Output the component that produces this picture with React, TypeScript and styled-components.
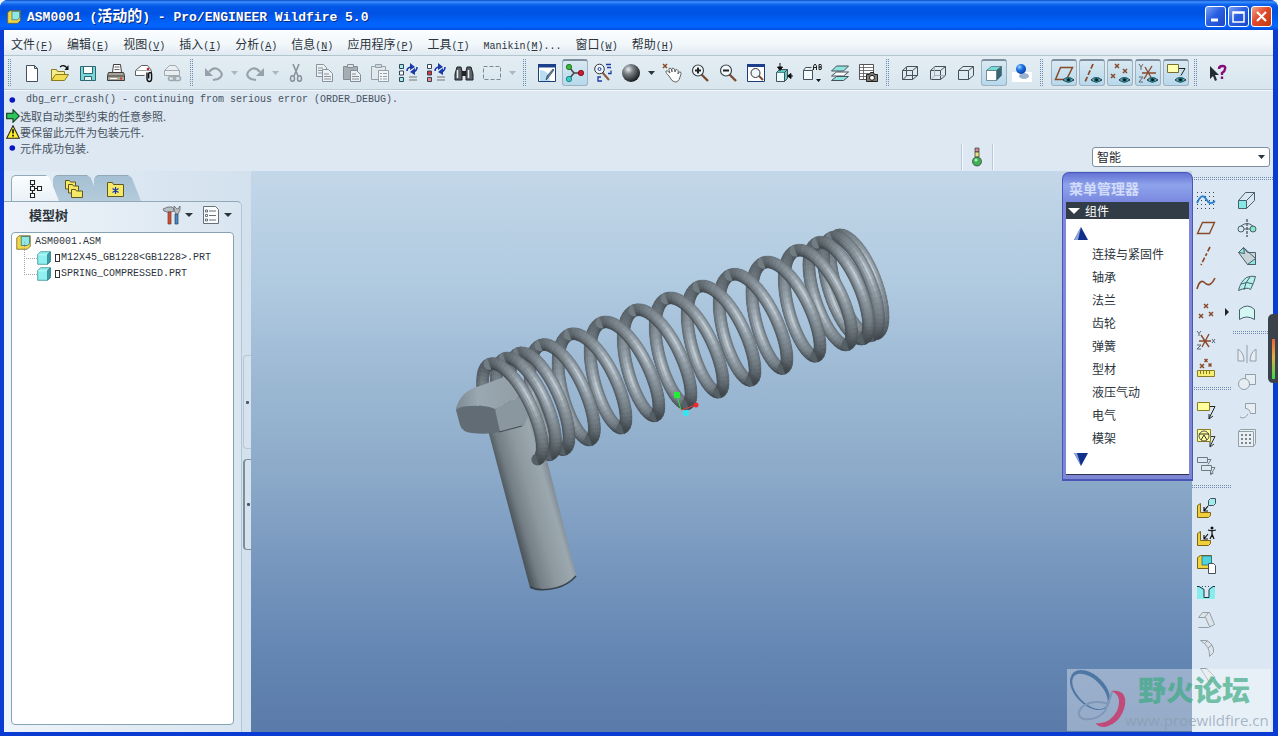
import React from "react";
import styled, { createGlobalStyle, css } from "styled-components";

const GlobalStyle = createGlobalStyle`
  * { box-sizing: border-box; }
  body { margin: 0; background: #eef3f8; color: #2c343c; font: 12px/16px "Noto Sans CJK SC", sans-serif; }
  button { font: inherit; color: inherit; border: 0; padding: 0; background: none; }
  ul { list-style: none; margin: 0; padding: 0; }
`;

/* ---------- window frame ---------- */

const Frame = styled.div`
  min-height: 100vh;
  display: flex;
  flex-direction: column;
  position: relative;
  overflow: hidden;
  border-radius: 8px 8px 0 0;
  background: #0a3cd4;
`;

const TitleBar = styled.header`
  height: 30px;
  flex: none;
  display: flex;
  align-items: center;
  gap: 6px;
  padding: 3px 6px 0 7px;
  background: linear-gradient(#0848c8 0, #3d95ff 2px, #1468f0 4px, #0055e6 7px, #0053e2 14px, #0062fb 22px, #0566ff 26px, #004fe0 30px);
`;

const Title = styled.h1`
  flex: 1;
  margin: 0;
  color: #fff;
  font: bold 13px/20px "Liberation Mono", monospace;
  text-shadow: 1px 1px #0a2a80;
  white-space: pre;
`;

const TitleCjk = styled.span`
  font: bold 15px/20px "Noto Sans CJK SC", sans-serif;
`;

const WindowButtons = styled.div`
  display: flex;
  gap: 2px;
`;

const WindowButton = styled.button<{ $close?: boolean }>`
  width: 21px;
  height: 21px;
  border: 1px solid #fff;
  border-radius: 3px;
  background: ${(p) =>
    p.$close
      ? "linear-gradient(135deg, #f0a58c, #e0492a 45%, #c23a14)"
      : "linear-gradient(135deg, #7ba2f4, #2a60e2 45%, #1b46c8)"};
  svg { display: block; margin: auto; }
`;

const Client = styled.div`
  flex: 1;
  display: flex;
  flex-direction: column;
  margin: 0 5px 4px 4px;
  background: #dde8f3;
`;

const Latin = styled.span`
  font-family: "Liberation Mono", monospace;
  font-size: 10px;
  white-space: pre;
`;

const MenuBar = styled.nav`
  height: 26px;
  display: flex;
  align-items: center;
  gap: 14px;
  padding: 5px 7px 0;
  background: linear-gradient(#fcfeff, #f0f6fa 60%, #e0eaf1);
  border-bottom: 1px solid #b4c6d0;
`;

const MenuButton = styled.button`
  white-space: nowrap;
  line-height: 18px;
`;

/* ---------- tool bars ---------- */

const ToolBar = styled.div`
  height: 34px;
  display: flex;
  align-items: center;
  background: linear-gradient(#e3edf3, #d9e6ee);
  border-bottom: 1px solid #b9cad6;
  box-shadow: 0 1px #f4f8fb;
`;

const stripes = css<{ $flat?: boolean }>`
  background:
    linear-gradient(${(p) => (p.$flat ? "180deg" : "90deg")}, transparent 1px, #dde8f1 1px 2px, transparent 2px),
    repeating-linear-gradient(${(p) => (p.$flat ? "90deg" : "180deg")}, #6f8bb2 0 1px, transparent 1px 2px);
`;

const Grip = styled.div`
  width: 3px;
  height: 28px;
  flex: none;
  margin: 0 7px 0 4px;
  ${stripes}
`;

const ToolButton = styled.button<{ $active?: boolean; $dim?: boolean }>`
  width: 28px;
  height: 28px;
  flex: none;
  display: flex;
  align-items: center;
  justify-content: center;
  svg { flex: none; opacity: ${(p) => (p.$dim ? 0.9 : 1)}; }
  ${(p) =>
    p.$active &&
    css`
      width: 26px;
      height: 27px;
      margin: 0 1px;
      border: 1px solid #9db1c1;
      border-top: 2px solid #7d8e9c;
      border-radius: 3px;
      background: linear-gradient(#d8e8f2, #b7d9ec);
    `}
`;

const DropButton = styled.button<{ $dim?: boolean }>`
  width: 13px;
  height: 28px;
  flex: none;
  display: flex;
  align-items: center;
  justify-content: center;
  color: ${(p) => (p.$dim ? "#a9b7c2" : "#2b333b")};
`;

/* ---------- message area ---------- */

const MessageArea = styled.section`
  height: 81px;
  display: flex;
  justify-content: space-between;
  padding: 2px 3px 0 2px;
`;

const Messages = styled.ul`
  color: #48525e;
  font-size: 11px;
`;

const Message = styled.li`
  height: 16px;
  display: flex;
  align-items: center;
  svg { flex: none; }
`;

const StatusRow = styled.div`
  align-self: flex-end;
  display: flex;
  align-items: center;
  padding-bottom: 1px;
`;

const StatusLight = styled.div`
  width: 32px;
  height: 26px;
  display: flex;
  align-items: center;
  justify-content: center;
  margin-right: 99px;
  border: solid #b9c8d8;
  border-width: 0 1px;
  box-shadow: inset 1px 0 #f6fafd, 1px 0 #f6fafd;
`;

const FilterBox = styled.div`
  position: relative;
  display: flex;
  svg { position: absolute; right: 5px; top: 8px; pointer-events: none; }
`;

const FilterSelect = styled.select`
  appearance: none;
  width: 178px;
  height: 20px;
  padding: 0 4px;
  border: 1px solid #7d8fa1;
  border-radius: 3px;
  background: #fff;
  color: #22282e;
  font: 12px/18px "Noto Sans CJK SC", sans-serif;
`;

/* ---------- navigator ---------- */

const Workspace = styled.main`
  flex: 1;
  display: flex;
  position: relative;
`;

const Navigator = styled.aside`
  width: 247px;
  flex: none;
  display: flex;
  background: linear-gradient(90deg, #e3edf5, #d3e1ee);
`;

const NavMain = styled.div`
  flex: 1;
  display: flex;
  flex-direction: column;
  padding-top: 4px;
`;

const TabStrip = styled.div`
  display: flex;
  height: 26px;
  padding-left: 7px;
`;

const Tab = styled.button<{ $active?: boolean }>`
  position: relative;
  z-index: ${(p) => (p.$active ? 2 : 1)};
  width: ${(p) => (p.$active ? 48 : 47)}px;
  margin-right: -6px;
  padding-right: 6px;
  display: flex;
  align-items: center;
  justify-content: center;
  border-top: 1px solid #93a9b8;
  border-left: 1px solid ${(p) => (p.$active ? "#93a9b8" : "transparent")};
  border-radius: 5px 0 0 0;
  clip-path: polygon(0 0, 72% 0, 80% 10%, 100% 100%, 0 100%);
  background: ${(p) => (p.$active ? "linear-gradient(#fbfdfe, #e9f1f7)" : "linear-gradient(#a5c0d3, #b4cbdb)")};
`;

const NavPanel = styled.div`
  flex: 1;
  display: flex;
  flex-direction: column;
  padding: 0 7px 7px;
  border-top: 1px solid #93a9b8;
  border-right: 1px solid #b4c5d3;
  border-radius: 0 5px 0 0;
  background: linear-gradient(90deg, #eef4f9, #d9e5f0);
`;

const NavHeader = styled.div`
  height: 30px;
  display: flex;
  align-items: center;
  padding: 0 2px 4px 18px;
`;

const NavTitle = styled.h2`
  flex: 1;
  margin: 0;
  font-size: 13px;
  line-height: 18px;
`;

const NavTool = styled.button`
  display: flex;
  align-items: center;
  gap: 3px;
  margin-left: 8px;
`;

const TreeBox = styled.div`
  flex: 1;
  padding: 1px 4px;
  border: 1px solid #86a3b4;
  border-radius: 4px;
  background: #fff;
`;

const TreeRow = styled.li<{ $level?: number }>`
  position: relative;
  height: 16px;
  display: flex;
  align-items: center;
  gap: 4px;
  padding-left: ${(p) => (p.$level ? 21 : 0)}px;
  svg { flex: none; }
  ${(p) =>
    p.$level &&
    css`
      &::before {
        content: "";
        position: absolute;
        left: 8px;
        bottom: 7px;
        width: 12px;
        height: 16px;
        border: dotted #9aa4ac;
        border-width: 0 0 1px 1px;
      }
    `}
`;

const Missing = styled.span`
  width: 5px;
  height: 8px;
  margin-right: -3px;
  border: 1px solid #333;
`;

const Sash = styled.div`
  width: 9px;
  display: flex;
  flex-direction: column;
  gap: 10px;
  padding: 184px 0 0 1px;
`;

const SashButton = styled.button<{ $raised?: boolean }>`
  height: ${(p) => (p.$raised ? 91 : 94)}px;
  display: flex;
  align-items: center;
  justify-content: center;
  border: 1px solid ${(p) => (p.$raised ? "#7f8e9b" : "#b7c6d4")};
  border-right: 0;
  border-left-width: ${(p) => (p.$raised ? 2 : 1)}px;
  border-radius: 4px 0 0 4px;
  background: #d5e3ef;
  &::before {
    content: "";
    width: 3px;
    height: 3px;
    border-radius: 1px;
    background: #4a5865;
  }
`;

/* ---------- graphics area ---------- */

const Viewport = styled.section`
  flex: 1;
  position: relative;
  background: linear-gradient(#c3d7e8 0%, #b0cae0 20%, #9db9d4 36%, #8eacca 52%, #7797be 70%, #6486b3 86%, #5a7ba9 100%);
`;

const Scene = styled.svg`
  position: absolute;
  inset: 0;
  width: 100%;
  height: 100%;
`;

const MenuManager = styled.div`
  position: absolute;
  z-index: 3;
  top: 1px;
  right: -1px;
  width: 131px;
  padding: 0 3px 4px;
  border: 1px solid #4a55b8;
  border-width: 1px 1px 2px;
  border-radius: 7px 7px 0 0;
  background: linear-gradient(#6473d4, #8ea3ec 12px, #7b8ae0 28px, #8087dc 60px, #7c86d2);
`;

const ManagerTitle = styled.h2`
  margin: 0;
  padding: 5px 3px 4px;
  color: #d3dcfa;
  font-size: 14px;
  line-height: 20px;
`;

const ManagerGroup = styled.button`
  width: 100%;
  height: 17px;
  display: flex;
  align-items: center;
  gap: 5px;
  padding: 0 2px;
  background: #323c46;
  color: #fff;
  svg { height: 6px; }
`;

const ManagerBody = styled.div`
  padding: 5px 8px 7px;
  background: #fff;
  border-bottom: 1px solid #2a3350;
`;

const ManagerScroll = styled.button`
  display: block;
  height: 18px;
  svg { display: block; }
`;

const ManagerItem = styled.button`
  display: block;
  height: 23px;
  padding-left: 18px;
  white-space: nowrap;
`;

/* ---------- feature rail ---------- */

const Rail = styled.aside`
  width: 81px;
  flex: none;
  padding-top: 6px;
  background: #dbe8f3;
`;

const DotLine = styled.div<{ $flat?: boolean }>`
  height: 3px;
  ${stripes}
`;

const RailColumns = styled.div`
  display: grid;
  grid-template-columns: 40px 39px;
  gap: 1px;
  padding-top: 6px;
`;

const RailColumn = styled.div`
  display: flex;
  flex-direction: column;
`;

const RailBreak = styled.div`
  padding: 5px 0 6px;
`;

const RailButton = styled.button<{ $dim?: boolean }>`
  position: relative;
  height: 28px;
  padding-left: 4px;
  text-align: left;
  opacity: ${(p) => (p.$dim ? 0.55 : 1)};
  svg { display: block; }
`;

const Flyout = styled.span`
  position: absolute;
  right: 3px;
  top: 10px;
  border: 4px solid transparent;
  border-left-color: #222;
  border-right: 0;
`;

/* ---------- overlays ---------- */

const Watermark = styled.div`
  position: absolute;
  z-index: 4;
  right: 2px;
  bottom: 1px;
  display: flex;
  align-items: center;
  width: 204px;
  height: 62px;
  background: rgba(255, 255, 255, 0.36);
  pointer-events: none;
`;

const WatermarkText = styled.div`
  width: 146px;
  margin-left: -2px;
  white-space: nowrap;
`;

const WatermarkName = styled.div`
  padding-left: 13px;
  color: rgba(60, 170, 130, 0.7);
  font: 900 28px/41px "Noto Sans CJK SC", sans-serif;
`;

const WatermarkUrl = styled.div`
  color: rgba(135, 155, 175, 0.7);
  font: 15px/21px "Open Sans", sans-serif;
`;

const EdgeWidget = styled.div`
  position: absolute;
  z-index: 5;
  right: 0;
  top: 314px;
  width: 10px;
  height: 69px;
  padding: 25px 2px 4px 4px;
  border-radius: 5px 0 0 5px;
  background: #3b4148;
  &::before {
    content: "";
    display: block;
    width: 3px;
    height: 40px;
    background: linear-gradient(#e8643c, #e0b040 45%, #38d850);
  }
`;

/* ---------- icons ---------- */

const S = "#46505a";
const BR = "#8a4a2a";
const CY = "#9fecec";
const Cross = ({ x, y, c = BR, r = 2 }: { x: number; y: number; c?: string; r?: number }) => (
  <path d={`M${x - r} ${y - r}l${2 * r} ${2 * r}M${x + r} ${y - r}l${-2 * r} ${2 * r}`} stroke={c} strokeWidth="1.5" />
);
const Eye = () => (
  <g>
    <path d="M9 17q5-5 11 0q-6 4-11 0z" fill="#8fb4c0" stroke="#234" strokeWidth="1" />
    <circle cx="14.5" cy="16.8" r="2.8" fill="#1d7f80" />
    <circle cx="14.5" cy="16.8" r="1.4" fill="#012" />
  </g>
);
const Swap = () => (
  <g fill="none" stroke="#1a3aa8" strokeWidth="1.6">
    <path d="M9 8q0-4 5-4M19 4q0 4-4 5" />
    <path d="M12 0l5 4-5 3zM17 5l-5 4 5 3z" fill="#1a3aa8" stroke="none" />
    <path d="M11 14h8M11 17h8" stroke="#777" strokeWidth="1" />
  </g>
);
const Boxes = ({ a, b, c }: { a: string; b: string; c: string }) => (
  <g stroke="#345" strokeWidth="1">
    <path d="M1.5 1.5h4v4h-4z" fill={a} />
    <path d="M1.5 8h4v4h-4z" fill={b} />
    <path d="M1.5 14.5h4v4h-4z" fill={c} />
  </g>
);
const Lens = ({ sign }: { sign: string }) => (
  <g fill="none">
    <path d="M11 11l7 7" stroke="#7b4a34" strokeWidth="2.4" />
    <circle cx="8" cy="7.5" r="5.5" fill="#f2f8fb" stroke="#3c444c" strokeWidth="1.2" />
    <path d={sign} stroke="#222" strokeWidth="2" />
  </g>
);
const CubeEdges = "M2.5 7.5h10v9h-10zM2.5 7.5l4.500-4h10.500l-5 4M17.500 3.500v9l-5 4";
const Bracket = () => (
  <path d="M1.500 7.500l3-2v9h10v3l-2 2h-11z" fill="#f0cf3c" stroke="#7c6414" strokeWidth="1" />
);

const icons: Record<string, React.ReactNode> = {
  newFile: <path d="M4.500 2.500h8l3 3v13h-11zM12.500 2.500v3h3" fill="#fff" stroke={S} />,
  open: (
    <g stroke="#8b7b20">
      <path d="M1.500 17.500v-11h5l1 2h7v3" fill="#f7ec8c" />
      <path d="M1.500 17.500l4-6h13l-4 6z" fill="#f2dc50" />
      <path d="M10 4q4-3 7 1" fill="none" stroke="#111" strokeWidth="1.300" />
      <path d="M18.500 2v5h-4z" fill="#111" stroke="none" />
    </g>
  ),
  save: (
    <g stroke="#2c6870">
      <path d="M2.500 3.500h15v14h-15z" fill="#7ad4da" />
      <path d="M5.500 3.500h9v7h-9z" fill="#fff" />
      <path d="M6.500 13.500h7v4h-7z" fill="#e6f4f6" />
    </g>
  ),
  print: (
    <g stroke="#3f3f3f">
      <path d="M6.500 9.500l1-8h7l1 8z" fill="#fff" />
      <path d="M8.500 4h5M8.500 6.500h5" strokeWidth=".8" />
      <path d="M2.500 9.500h15l1 3v5h-17v-5z" fill="#a9a296" />
      <path d="M2 13h16" />
      <path d="M4 15.500h7" stroke="#fff" />
      <path d="M14 15.500h2" stroke="#d04020" strokeWidth="2" />
    </g>
  ),
  mail: (
    <g>
      <path d="M1.500 12.500v-5l6-5h6l4 5v3M1.500 12.500h9" fill="#fff" stroke="#5a6068" />
      <path d="M1.500 7.500h16" stroke="#9aa" />
      <circle cx="14" cy="6" r="1.300" fill="#d02020" />
      <path d="M13 9.500v6q0 3 2.300 3t2.300-3v-4q0-2-1.500-2t-1.400 2v4" fill="none" stroke="#111" strokeWidth="1.400" />
    </g>
  ),
  mailLink: (
    <g fill="none" stroke="#9aa3ab">
      <path d="M2.500 12.500v-5l5-5h6l4 5v5z" fill="#eceff2" />
      <path d="M2.500 7.500h15" />
      <rect x="6.500" y="13.500" width="7" height="4" rx="2" strokeWidth="1.600" fill="#dde5ea" />
      <rect x="11.500" y="13.500" width="7" height="4" rx="2" strokeWidth="1.600" />
    </g>
  ),
  undo: (
    <g fill="none" stroke="#8f9aa3" strokeWidth="2.200">
      <path d="M5 9q5-6 10-2q6 5-1 9l-5 1" />
      <path d="M1 5v8h8z" fill="#8f9aa3" stroke="none" />
    </g>
  ),
  redo: (
    <g fill="none" stroke="#8f9aa3" strokeWidth="2.200">
      <path d="M15 9q-5-6-10-2q-6 5 1 9l5 1" />
      <path d="M19 5v8h-8z" fill="#8f9aa3" stroke="none" />
    </g>
  ),
  cut: (
    <g fill="none" stroke="#7d8790" strokeWidth="1.500">
      <path d="M7 1l5 12M13 1l-5 12" />
      <ellipse cx="6.500" cy="15.500" rx="2" ry="2.800" />
      <ellipse cx="13.500" cy="15.500" rx="2" ry="2.800" />
    </g>
  ),
  copy: (
    <g fill="#eef2f5" stroke="#7f8991">
      <path d="M2.500 1.500h7l3 3v9h-10z" />
      <path d="M4 5h5M4 7.500h5M4 10h5" />
      <path d="M8.500 6.500h6l4 4v8h-10z" />
      <path d="M10 11h5M10 13.500h7M10 16h7" />
    </g>
  ),
  paste: (
    <g stroke="#7a848c">
      <path d="M1.500 3.500h14v13h-14z" fill="#a0a8ae" />
      <path d="M5.500 1.500h6v3h-6z" fill="#dfe5e9" />
      <path d="M8.500 7.500h6l4 4v7h-10z" fill="#eef2f5" />
      <path d="M10 11h4M10 13.500h7M10 16h7" />
    </g>
  ),
  pasteSpecial: (
    <g stroke="#8e98a0">
      <path d="M1.500 3.500h14v13h-14z" fill="#e3e9ed" />
      <path d="M5.500 1.500h6v3h-6z" fill="#cfd6db" />
      <path d="M8.500 7.500h10v11h-10z" fill="#f4f7f9" />
      <path d="M10 10.500h2M13 10.500h4M10 13.500h2M13 13.500h4M10 16h2M13 16h4" />
    </g>
  ),
  regenerate: <g><Boxes a={CY} b="#fff" c={CY} /><Swap /></g>,
  regenerateManager: <g><Boxes a="#fff" b="#d33" c="#e88" /><Swap /></g>,
  find: (
    <g>
      <path d="M3 4h4l1 4v9H1v-6zM17 4h-4l-1 4v9h7v-6z" fill="#5a6168" stroke="#1d2226" />
      <path d="M8 8h4v5H8z" fill="#222" />
      <path d="M3.500 7v8M14.500 7v8" stroke="#e8eaec" strokeWidth="1.500" />
    </g>
  ),
  selectBox: <path d="M1.500 3.500h17v13h-17z" fill="none" stroke="#747e87" strokeDasharray="4 2" />,
  repaint: (
    <g>
      <path d="M1.500 1.500h17v17h-17z" fill="#fff" stroke="#1c3f7c" />
      <path d="M1 1h18v3.500H1z" fill="#1c3f8c" />
      <path d="M3 7q9 0 10 11h-10z" fill="#b9dcf0" />
      <path d="M17 7l-6 8-2 2 1-4 6-7z" fill="#5a7fa8" stroke="#233" strokeWidth=".600" />
    </g>
  ),
  spinCenter: (
    <g>
      <path d="M4 4l5 6-5 6M9 10h7" fill="none" stroke="#444" strokeWidth="1.500" />
      <circle cx="4" cy="4" r="2.700" fill="#38b838" stroke="#145814" strokeWidth=".700" />
      <circle cx="4" cy="16" r="2.700" fill="#30d0c8" stroke="#14605c" strokeWidth=".700" />
      <circle cx="16" cy="10" r="2.700" fill="#d01830" stroke="#600" strokeWidth=".700" />
    </g>
  ),
  orientMode: (
    <g fill="none">
      <path d="M9 9l7 8" stroke="#8a5a44" strokeWidth="2" />
      <circle cx="6.500" cy="6" r="4.800" fill="#f0f7fb" stroke="#333" />
      <circle cx="6.500" cy="6" r="1.500" stroke="#1a3aa8" />
      <path d="M13 1.500h5M14 4.500h4M18 7.500v3h-3M8 14H5v4h4" stroke="#1a3aa8" strokeWidth="1.300" />
    </g>
  ),
  sphere: <circle cx="10" cy="10" r="9" fill="url(#ball)" />,
  hand: (
    <g>
      <Cross x={3} y={3} />
      <path d="M7 13q-4-4-3-5t4 2q-2-5 0-5t2 4q-1-4 1-4t2 4q0-3 2-2.500t1 4.500q1-3 2.500-2t-.5 5q-1 5-5 5-3 0-6-6z" fill="#fff" stroke="#555" strokeWidth=".900" />
    </g>
  ),
  zoomIn: <Lens sign="M8 4.500v6M5 7.500h6" />,
  zoomOut: <Lens sign="M5 7.500h6" />,
  refit: (
    <g>
      <path d="M1.500 1.500h17v17h-17z" fill="#fff" stroke="#1c3f7c" />
      <path d="M1 1h18v3H1z" fill="#1c3f8c" />
      <path d="M12 12l5 5" stroke="#7b4a34" strokeWidth="2" />
      <circle cx="9.500" cy="10" r="4.500" fill="#eef7fb" stroke="#333" />
    </g>
  ),
  reorient: (
    <g>
      <path d="M2.500 9.500h8v9h-8z" fill="#e8fafa" stroke={S} />
      <path d="M2.500 9.500l3-3h8l-3 3M13.500 6.500v9l-3 3v-9z" fill="#58c8c0" stroke={S} />
      <path d="M6 0v6M3.500 4L6 7.500 8.500 4zM19 13h-5M17 10.500L13.500 13l3.500 2.500z" fill="#111" stroke="#111" strokeWidth="1" />
    </g>
  ),
  savedViews: (
    <g fill="none" stroke={S}>
      <path d="M1.500 7.500l2-3h6M1.500 7.500v9h9v-9zM10.500 7.500l1-2" fill="#f4fafb" />
      <path d="M11.500 7V3l1.500-2 1.500 2v4M11.500 4.500h3M17 1.500h2l.500 1-.500 1.500h-2l2 0 .500 1-.500 1.500h-2z" strokeWidth="1" stroke="#222" />
      <path d="M14 16h5l-2.500 3z" fill="#111" stroke="none" />
    </g>
  ),
  layers: (
    <g stroke={S}>
      <path d="M1.500 17.500l5-4h12l-5 4z" fill="#8fe4e0" />
      <path d="M1.500 13l5-4h12l-5 4z" fill="#fff" />
      <path d="M1.500 8l5-5h12l-5 5z" fill="#8fe4e0" />
    </g>
  ),
  viewManager: (
    <g stroke="#555">
      <path d="M1.500 1.500h14v15h-14z" fill="#fff" />
      <path d="M1.500 4.500h14M1.500 7.500h14M1.500 10.500h14M1.500 13.500h14M5.500 1.500v15" strokeWidth=".800" />
      <path d="M8.500 11.500h3l1-2h3l1 2h3v7h-11z" fill="#847f76" stroke="#222" />
      <circle cx="14" cy="14.800" r="2.500" fill="#fff" stroke="#111" />
    </g>
  ),
  wireframe: <path d={CubeEdges + "M6.500 4v9l-4 4M6.500 12.500h11"} fill="none" stroke={S} />,
  hiddenLine: (
    <g fill="none" stroke={S}>
      <path d={CubeEdges} />
      <path d="M6.500 4v9l-4 4M6.500 12.500h11" stroke="#a7b0b8" />
    </g>
  ),
  noHidden: <path d={CubeEdges} fill="none" stroke={S} />,
  shaded: (
    <g stroke="#4a6a70" strokeWidth=".700">
      <path d="M2.500 7.500l5-4h10l-5 4z" fill="#6fdcd8" />
      <path d="M12.500 7.500l5-4v9l-5 5z" fill="#3a6470" />
      <path d="M2.500 7.500h10v10h-10z" fill="#fff" />
    </g>
  ),
  realism: (
    <g>
      <path d="M0 9h20v10H0z" fill="#fff" />
      <ellipse cx="12" cy="13" rx="5" ry="3" fill="#9ab4cf" />
      <circle cx="9" cy="6" r="5" fill="url(#blueball)" />
    </g>
  ),
  planes: <g><path d="M6.500 4.500h12l-6 12h-11z" fill="none" stroke={BR} strokeWidth="1.500" /><Eye /></g>,
  axes: <g><path d="M11 1L3 19" stroke={BR} strokeWidth="1.700" strokeDasharray="5 2" /><Eye /></g>,
  points: <g><Cross x={7} y={3} /><Cross x={3} y={13} /><Cross x={15} y={8} /><Eye /></g>,
  csys: (
    <g>
      <path d="M4 10h14M7 4l7 12M14 3l-8 13" stroke={BR} strokeWidth="1.300" />
      <path d="M1 1l2 3 2-3M3 4v3M1 14h4l-4 5h4" fill="none" stroke="#666" />
      <Eye />
    </g>
  ),
  annotations: (
    <g>
      <path d="M1.500 1.500h11v8h-11z" fill="#ffffb0" stroke="#777030" />
      <path d="M13 5.500h6l-4 7" fill="none" stroke="#222" />
      <Eye />
    </g>
  ),
  help: (
    <g>
      <path d="M2 3v13l3-3 2 5 2-1-2-5h4z" fill="#222b33" />
      <path d="M11 6q0-3 3.500-3T17 6q0 2-3 4v2M14 13.500v2.500" fill="none" stroke="#860a78" strokeWidth="2.400" />
    </g>
  ),

  sketch: (
    <g fill="none">
      <path d="M1.500 2v17M5.500 2v17M9.500 2v17M13.500 2v17M17.500 2v17" stroke="#345" strokeDasharray="1 3" />
      <path d="M1 13q5-11 9-4t9 2" stroke="#2a80d0" strokeWidth="1.900" />
    </g>
  ),
  plane: <path d="M6.500 4.500h12l-5 11h-12z" fill="none" stroke={BR} strokeWidth="1.400" />,
  axis: <path d="M14 1L5 19" stroke={BR} strokeWidth="1.700" strokeDasharray="5 2 3 2" />,
  curve: <path d="M1 15q3-11 8-6t10-5" fill="none" stroke={BR} strokeWidth="1.600" />,
  point: <g><Cross x={10} y={4} /><Cross x={5} y={14} /><Cross x={15} y={12} /></g>,
  coord: (
    <g fill="none">
      <path d="M3 11h12M5 5l8 12M13 4L6 17" stroke={BR} strokeWidth="1.400" />
      <path d="M1 1l2 2.500L5 1M3 3.500V6M1 15h4l-4 4h4M16 9l3 4M19 9l-3 4" stroke="#567" />
    </g>
  ),
  analysis: (
    <g>
      <Cross x={6} y={8} /><Cross x={14} y={7} r={1.5} /><Cross x={10} y={2.500} r={1.500} />
      <path d="M1.500 12.500h17v6h-17z" fill="#f6ee70" stroke="#8a7c20" />
      <path d="M4.500 13v3M7.500 13v3M10.500 13v3M13.500 13v3" stroke="#8a7c20" />
    </g>
  ),
  note: (
    <g>
      <path d="M1.500 2.500h12v8h-12z" fill="#ffff9c" stroke="#8a7c20" />
      <path d="M14 6.500h5l-6 12M13 14v5l4-3" fill="none" stroke="#222" />
    </g>
  ),
  driven: (
    <g fill="none">
      <path d="M1.500 1.500h13v12h-13z" fill="#ffff9c" stroke="#8a7c20" />
      <circle cx="8" cy="8" r="5" stroke="#555" />
      <path d="M3 6h10M5 12l3-5 3 5M15 8.500h4l-5 10M14 14v5l4-3" stroke="#333" />
    </g>
  ),
  notesGroup: (
    <g fill="none" stroke="#707a83">
      <path d="M1.500 1.500h10v5h-10zM5.500 9.500h10v5h-10zM12 3.500h3l-3 5M16 11.500h3l-4 7M14.500 15v3.500l3-1.500" />
    </g>
  ),
  assemble: (
    <g>
      <Bracket />
      <path d="M12.500 2.500l2-2h5v5l-2 2h-5z" fill={CY} stroke={S} />
      <path d="M12 8l-4 5M8 9v4h4" fill="none" stroke="#111" strokeWidth="1.200" />
    </g>
  ),
  manikin: (
    <g>
      <Bracket />
      <circle cx="16" cy="2" r="1.500" fill="#111" />
      <path d="M12 4l4 1 4-1M16 4v5l-2 4M16 8l2 5M12 8l-4 5M8 9v4h4" fill="none" stroke="#111" strokeWidth="1.200" />
    </g>
  ),
  create: (
    <g>
      <path d="M1.500 3.500l3-2h11v13h-14z" fill="#f4d23e" stroke="#7c6414" />
      <path d="M6 2h9.500v9H6z" fill="#50d4dc" stroke="#28707a" strokeWidth=".800" />
      <path d="M12.500 9.500h5l2 2v8h-7z" fill="#fff" stroke={S} />
    </g>
  ),
  hole: (
    <g>
      <path d="M1 4h3l4 3v9h5V7l3-3h3v13H1z" fill="#86ecec" />
      <path d="M1 4.500h2l5 3v8h5v-8l4-3h2" fill="none" stroke="#234" />
      <path d="M6 4.500h9" stroke="#345" strokeDasharray="1 2" />
    </g>
  ),
  shell: <path d="M2.500 17.500h10l6-3-5-12h-7l-4 5h7l4 9M8.500 7.500l4-5" fill="#dfe3e6" stroke="#59626a" />,
  round: <path d="M4.500 2.500h6q8 4 7 12l-4 4q1-10-9-16M8.500 5.500l3-3M12 10l4-3" fill="#dfe3e6" stroke="#59626a" />,
  chamfer: <path d="M4.500 2.500h6l8 8-5 6-9-14" fill="#dfe3e6" stroke="#59626a" />,
  extrude: (
    <g fill="none" stroke="#48606c">
      <path d="M1.500 10.500h8v8h-8z" fill="#84e8e4" />
      <path d="M1.500 10.500l7-8h9v8l-8 8M9.500 10.500l8-8" />
    </g>
  ),
  revolve: (
    <g fill="none" stroke="#48606c">
      <path d="M10 1v18" strokeDasharray="3 1" stroke="#222" />
      <circle cx="4" cy="11" r="3" />
      <circle cx="16" cy="11" r="3" fill="#84e8c4" />
      <path d="M4 8q6-5 12 0M7 11h6" />
    </g>
  ),
  blend: (
    <g stroke="#48606c">
      <path d="M1.500 6.500l5-5 4 5h8v12h-8z" fill="#c9d4d8" />
      <path d="M1.500 6.500l5-5 1 6zM10.500 18.500l8-6v6z" fill="#8ce8e0" />
      <path d="M6.500 1.500l12 11" fill="none" />
    </g>
  ),
  surface: (
    <g stroke="#48606c">
      <path d="M1.500 16.500q2-9 8-13 4-2 9-1-1 5-5 13-3-3-12 1z" fill="#b4f0ec" />
      <path d="M4 10q6-3 12 0M7 16q1-8 6-13" fill="none" />
    </g>
  ),
  style: <path d="M2.500 17.500v-10q8-7 15 0v10q-8-5-15 0z" fill="#d4f6f4" stroke="#48606c" />,
  mirror: <path d="M10 1v18M1 17h6q0-8-6-12zM19 17h-6q0-8 6-12z" fill="#f0f3f5" stroke="#59626a" />,
  merge: (
    <g fill="#f0f3f5" stroke="#59626a">
      <path d="M8.500 2.500h10v10h-10z" />
      <circle cx="7" cy="12" r="5.500" />
    </g>
  ),
  trim: <path d="M8.500 3.500h10v10h-5q-1-5-5-5zM3 17q4 3 8-3" fill="#f0f3f5" stroke="#59626a" />,
  pattern: (
    <g>
      <path d="M1.500 3.500l2-2h15v14l-2 3h-15zM1.500 3.500h15v15" fill="#f4f7f9" stroke="#59626a" />
      <path d="M5 6v11M9 6v11M13 6v11" stroke="#333" strokeWidth="2" strokeDasharray="2 2" />
    </g>
  ),

  tree: <path d="M7.500 1.500h4v4h-4zM7.500 7.500h4v4h-4zM7.500 14.500h4v4h-4zM14.500 7.500h4v4h-4zM9.500 5.500v2M9.500 11.500v3M11.500 9.500h3" fill="#fff" stroke="#222" strokeWidth="1.100" />,
  folders: (
    <g fill="#f6e968" stroke="#5f5820">
      <path d="M1.500 1.500h4l1 1.500h5v7h-10z" />
      <path d="M4.500 5.500h4l1 1.500h5v7h-10z" />
      <path d="M7.500 10.500h4l1 1.500h6v6.500h-11z" />
    </g>
  ),
  favorites: (
    <g>
      <path d="M2.500 3.500h5l1 2h10v12h-16z" fill="#f6e968" stroke="#5f5820" />
      <path d="M10.500 8v7M7.500 9.500l6 4M13.500 9.500l-6 4" stroke="#1a3aa8" strokeWidth="1.200" />
    </g>
  ),
  settings: (
    <g>
      <path d="M1 4l5-2h4l2 2v2l-3 1H5L2 6z" fill="#b8c0c6" stroke="#555" strokeWidth=".700" />
      <path d="M6 7h3v12H6z" fill="#d0522c" stroke="#733" strokeWidth=".700" />
      <path d="M13 9h3v10h-3z" fill="#4a88c8" stroke="#245" strokeWidth=".700" />
      <path d="M12 1v4l2 4h2l2-4V1l-2 3h-1z" fill="#b8c0c6" stroke="#555" strokeWidth=".700" />
    </g>
  ),
  show: (
    <g>
      <path d="M2.500 1.500h12l3 3v14h-15z" fill="#fafcfd" stroke="#667079" />
      <path d="M8 6h7M8 10.500h7M8 15h7" stroke="#667079" />
      <path d="M4.500 5h2v2h-2zM4.500 9.500h2v2h-2zM4.500 14h2v2h-2z" fill="none" stroke="#345" strokeWidth=".700" />
    </g>
  ),
  asm: (
    <g>
      <path d="M1 4l3-3h15v14l-4 4H1z" fill="#f3d648" stroke="#6e5f14" />
      <path d="M7 2h11v9l-3 3H7z" fill="#8fe8e6" stroke="#2b6f74" />
    </g>
  ),
  part: (
    <g stroke="#2b7f86">
      <path d="M1 5l4-4h14v14l-4 4H1z" fill="#8ff0f0" />
      <path d="M15 5l4-4v14l-4 4z" fill="#3f9aa2" />
      <path d="M2 5.500h12" stroke="#d8ffff" />
    </g>
  ),
  bullet: <circle cx="9" cy="10" r="4" fill="#0818c0" />,
  prompt: <path d="M1 6h9V1l9 9-9 9v-5H1z" fill="#2ec45c" stroke="#0a3018" strokeWidth="1.500" />,
  warning: (
    <g>
      <path d="M10 1l9 18H1z" fill="#ffee28" stroke="#222" strokeWidth="1.500" />
      <path d="M10 6v6M10 14v2.500" stroke="#111" strokeWidth="2.400" />
    </g>
  ),
  light: (
    <g stroke="#333" strokeWidth=".700">
      <path d="M8 1h4v4H8z" fill="#d08a8a" />
      <path d="M8 5h4v5H8z" fill="#e8e47c" />
      <circle cx="10" cy="14.500" r="4.500" fill="#3cb054" />
      <circle cx="9" cy="13" r="1.500" fill="#b4f0b8" stroke="none" />
    </g>
  ),
};

const Icon = ({ name, size = 20 }: { name: string; size?: number }) => (
  <svg width={size} height={size} viewBox="0 0 20 20" fill="none" aria-hidden="true">
    {icons[name]}
  </svg>
);

const Caret = ({ size = 7 }: { size?: number }) => (
  <svg width={size} height="4" viewBox="0 0 8 4" preserveAspectRatio="none" aria-hidden="true">
    <path d="M0 0h8L4 4z" fill="currentColor" />
  </svg>
);

/* ---------- 3D model ---------- */

type Vec = [number, number, number];
const add = (a: Vec, b: Vec, k = 1): Vec => [a[0] + b[0] * k, a[1] + b[1] * k, a[2] + b[2] * k];
const dot = (a: Vec, b: Vec) => a[0] * b[0] + a[1] * b[1] + a[2] * b[2];
const unit = (a: Vec): Vec => {
  const l = Math.hypot(...a);
  return [a[0] / l, a[1] / l, a[2] / l];
};
const cross = (a: Vec, b: Vec): Vec => [
  a[1] * b[2] - a[2] * b[1],
  a[2] * b[0] - a[0] * b[2],
  a[0] * b[1] - a[1] * b[0],
];

/* Horizontal position of the coil centre at every half turn: top, bottom, top, ... */
const centres = [
  508, 519, 523, 532, 537, 546, 559, 572, 588, 604, 620, 637, 653, 669, 685, 701, 717, 733, 749, 765, 782, 798, 814, 829,
  836, 845, 850, 854, 856, 858,
];
const RADIUS = 53;
const TUBE = 6;
const down: Vec = [0.347, 0.938, 0];
const near: Vec = [0.33, -0.122, 0.936];
const lightDir = unit([0.06, -0.26, 0.96]);

const helix = (h: number): Vec => {
  const c = Math.max(0, Math.min(h, centres.length - 1.001));
  const i = Math.floor(c);
  const at = (n: number) => centres[Math.max(0, Math.min(n, centres.length - 1))];
  const [a, b, d, e] = [at(i - 1), at(i), at(i + 1), at(i + 2)];
  const u = c - i;
  const x = b + 0.5 * u * (d - a + u * (2 * a - 5 * b + 4 * d - e + u * (3 * (b - d) + e - a)));
  const base: Vec = [x, 342 - 0.37 * (x - 702), -0.3 * (x - 702)];
  const t = h * Math.PI;
  return add(add(base, down, -RADIUS * Math.cos(t)), near, RADIUS * Math.sin(t));
};

const shade = (n: Vec) => {
  const d = Math.max(0, dot(n, lightDir));
  const s = Math.pow(d, 14);
  const v = (lo: number, mid: number, hi: number) => Math.round(lo + (mid - lo) * Math.pow(d, 0.95) + hi * s);
  return `rgb(${v(64, 148, 44)},${v(71, 159, 44)},${v(76, 167, 44)})`;
};

const STEPS = 26;
const BANDS = 8;

const crossSection = (h: number) => {
  const p = helix(h);
  const tan = unit(add(helix(h + 0.02), helix(h - 0.02), -1));
  const flat = Math.hypot(tan[0], tan[1]) || 1;
  const side: Vec = [-tan[1] / flat, tan[0] / flat, 0];
  return { p, side, face: unit(cross(tan, side)) };
};

const halfTurn = (k: number, from = 0) => {
  const out: React.ReactNode[] = [];
  for (let j = from; j < STEPS; j++) {
    const a = crossSection(k + j / STEPS);
    const b = crossSection(k + (j + 1) / STEPS);
    for (let s = 0; s < BANDS; s++) {
      const w0 = Math.sin(((s / BANDS) * 2 - 1) * (Math.PI / 2));
      const w1 = Math.sin((((s + 1) / BANDS) * 2 - 1) * (Math.PI / 2));
      const w = (w0 + w1) / 2;
      const n = add([a.side[0] * w, a.side[1] * w, 0], a.face, Math.sqrt(1 - w * w));
      const pts = [
        add(a.p, a.side, w0 * TUBE),
        add(a.p, a.side, w1 * TUBE),
        add(b.p, b.side, w1 * TUBE),
        add(b.p, b.side, w0 * TUBE),
      ];
      /* Facets that fold back on the inside of a tight bend face away from the viewer. */
      const d1 = add(pts[2], pts[0], -1);
      const d2 = add(pts[3], pts[1], -1);
      if (d1[0] * d2[1] - d1[1] * d2[0] > 0) continue;
      const fill = shade(n);
      out.push(
        <polygon
          key={`${k}-${j}-${s}`}
          points={pts.map((q) => `${q[0].toFixed(2)},${q[1].toFixed(2)}`).join(" ")}
          fill={fill}
          stroke={fill}
          strokeWidth="0.4"
          strokeLinejoin="round"
        />
      );
    }
  }
  return out;
};

const Joint = ({ h }: { h: number }) => {
  const p = helix(h);
  return <circle cx={p[0].toFixed(1)} cy={p[1].toFixed(1)} r={TUBE} fill={h % 2 ? "#555f66" : "#717c83"} />;
};

const lastTop = centres.length - 2;
const backCoils: React.ReactNode[] = [];
const frontCoils: React.ReactNode[] = [];
for (let k = lastTop; k >= 0; k -= 2) {
  if (k < lastTop) backCoils.push(<g key={k}>{halfTurn(k + 1)}</g>);
  frontCoils.push(
    <g key={k}>
      <Joint h={k} />
      <Joint h={k + 1} />
      {halfTurn(k)}
    </g>
  );
}
backCoils.push(<g key="start">{halfTurn(-1, 9)}</g>);

const Model = () => (
  <Scene viewBox="251 171 941 561" preserveAspectRatio="xMidYMid meet" role="img" aria-label="M12X45_GB1228 SPRING_COMPRESSED">
    <defs>
      <linearGradient id="shaft" gradientUnits="userSpaceOnUse" x1="509" y1="510" x2="557" y2="496">
        <stop offset="0" stopColor="#4d565d" />
        <stop offset=".18" stopColor="#737d84" />
        <stop offset=".5" stopColor="#8d989f" />
        <stop offset=".85" stopColor="#9ca8af" />
        <stop offset="1" stopColor="#7f8a92" />
      </linearGradient>
      <linearGradient id="headTop" x1="0" y1="0" x2="1" y2="0">
        <stop offset="0" stopColor="#7d8a93" />
        <stop offset=".35" stopColor="#9aa8b1" />
        <stop offset="1" stopColor="#929ea6" />
      </linearGradient>
    </defs>
    {backCoils}
    <path d="M488 430L530 588Q540 592 556 588Q568 585 576 575L548 464L530 415z" fill="url(#shaft)" />
    <path d="M530 587Q540 592 556 588Q568 585 576 576" fill="none" stroke="#39434b" strokeWidth="1.500" />
    <path d="M456 408Q460 396 468 391Q474 387 480 386L504 377Q514 380 520 396L495 409L478 405L456 410z" fill="url(#headTop)" />
    <path d="M495 409L520 397L530 412L524 426L499 432z" fill="#8b979e" />
    <path d="M456 410Q460 406 470 406Q486 405 495 409L500 432Q486 435 472 433Q462 432 460 425z" fill="#616c74" />
    <path d="M499 432L522 426" stroke="#3f494f" />
    {frontCoils}
    <path d="M681 410L677 396" stroke="#30e040" />
    <path d="M681 410L696 405" stroke="#e04040" />
    <path d="M674 392h6v6h-6z" fill="#28e838" />
    <circle cx="696" cy="405" r="2.500" fill="#f02828" />
    <circle cx="686" cy="413" r="3" fill="#30e8f0" />
  </Scene>
);

/* ---------- data ---------- */

const menus: [string, string, string][] = [
  ["文件", "F", ""], ["编辑", "E", ""], ["视图", "V", ""], ["插入", "I", ""], ["分析", "A", ""], ["信息", "N", ""],
  ["应用程序", "P", ""], ["工具", "T", ""], ["Manikin", "M", "..."], ["窗口", "W", ""], ["帮助", "H", ""],
];

/* "|" is a grip, "v" a drop-down arrow, "*" marks a pressed button, "-" a disabled one. */
const toolbar =
  "| newFile open save print mail -mailLink | -undo -v -redo -v -cut -copy -paste -pasteSpecial regenerate regenerateManager find -selectBox -v | repaint *spinCenter orientMode sphere v hand zoomIn zoomOut refit reorient savedViews layers viewManager | wireframe hiddenLine noHidden *shaded realism | *planes *axes *points *csys *annotations | help".split(" ");

const railLeft =
  "sketch plane axis curve point coord analysis | note driven notesGroup | assemble manikin create hole -shell -round -chamfer".split(" ");
const railRight = "extrude revolve blend surface style | -mirror -merge -trim -pattern".split(" ");

const managerItems = ["连接与紧固件", "轴承", "法兰", "齿轮", "弹簧", "型材", "液压气动", "电气", "模架"];

const bare = (s: string) => s.replace(/^[-*]/, "");

const RailSet = ({ items }: { items: string[] }) => (
  <RailColumn>
    {items.map((it, i) =>
      it === "|" ? (
        <RailBreak key={i}><DotLine $flat /></RailBreak>
      ) : (
        <RailButton key={i} $dim={it[0] === "-"} disabled={it[0] === "-"} aria-label={bare(it)}>
          <Icon name={bare(it)} />
          {it === "point" && <Flyout />}
        </RailButton>
      )
    )}
  </RailColumn>
);

export default function App() {
  return (
    <Frame>
      <GlobalStyle />
      <TitleBar>
        <Icon name="asm" size={14} />
        <Title>
          ASM0001 (<TitleCjk>活动的</TitleCjk>) - Pro/ENGINEER Wildfire 5.0
        </Title>
        <WindowButtons>
          <WindowButton aria-label="最小化">
            <svg width="15" height="15"><path d="M3 11h7" stroke="#fff" strokeWidth="3" /></svg>
          </WindowButton>
          <WindowButton aria-label="最大化">
            <svg width="15" height="15"><path d="M2 3h11v10H2zM2 4h11" fill="none" stroke="#fff" strokeWidth="1.500" /></svg>
          </WindowButton>
          <WindowButton $close aria-label="关闭">
            <svg width="15" height="15"><path d="M3 3l9 9M12 3l-9 9" stroke="#fff" strokeWidth="2.200" /></svg>
          </WindowButton>
        </WindowButtons>
      </TitleBar>
      <Client>
        <MenuBar>
          {menus.map(([label, key, tail]) => (
            <MenuButton key={label}>
              {label === "Manikin" ? <Latin>{label}</Latin> : label}
              <Latin>(<u>{key}</u>){tail}</Latin>
            </MenuButton>
          ))}
        </MenuBar>
        <ToolBar role="toolbar">
          <svg width="0" height="0" aria-hidden="true">
            <defs>
              <radialGradient id="ball" cx=".35" cy=".3" r=".75">
                <stop offset="0" stopColor="#e8ecef" />
                <stop offset=".35" stopColor="#7c8286" />
                <stop offset="1" stopColor="#111416" />
              </radialGradient>
              <radialGradient id="blueball" cx=".35" cy=".3" r=".75">
                <stop offset="0" stopColor="#a8d4ff" />
                <stop offset=".4" stopColor="#1f78e8" />
                <stop offset="1" stopColor="#0838a0" />
              </radialGradient>
            </defs>
          </svg>
          {toolbar.map((it, i) => {
            if (it === "|") return <Grip key={i} />;
            const off = it[0] === "-";
            const name = bare(it);
            if (name === "v")
              return <DropButton key={i} $dim={off} disabled={off} aria-label="更多"><Caret /></DropButton>;
            return (
              <ToolButton key={i} $active={it[0] === "*"} $dim={off} disabled={off} aria-label={name}>
                <Icon name={name} />
              </ToolButton>
            );
          })}
        </ToolBar>
        <MessageArea>
          <Messages>
            <Message><Icon name="bullet" size={14} /><Latin>{" dbg_err_crash() - continuing from serious error (ORDER_DEBUG)."}</Latin></Message>
            <Message><Icon name="prompt" size={14} />选取自动类型约束的任意参照.</Message>
            <Message><Icon name="warning" size={14} />要保留此元件为包装元件.</Message>
            <Message><Icon name="bullet" size={14} />元件成功包装.</Message>
          </Messages>
          <StatusRow>
            <StatusLight><Icon name="light" /></StatusLight>
            <FilterBox>
              <FilterSelect aria-label="过滤器" defaultValue="智能">
                <option>智能</option>
              </FilterSelect>
              <Caret />
            </FilterBox>
          </StatusRow>
        </MessageArea>
        <Workspace>
          <Navigator>
            <NavMain>
              <TabStrip>
                <Tab $active aria-label="模型树"><Icon name="tree" /></Tab>
                <Tab aria-label="文件夹浏览器"><Icon name="folders" /></Tab>
                <Tab aria-label="收藏夹"><Icon name="favorites" /></Tab>
              </TabStrip>
              <NavPanel>
                <NavHeader>
                  <NavTitle>模型树</NavTitle>
                  <NavTool aria-label="设置"><Icon name="settings" /><Caret size={8} /></NavTool>
                  <NavTool aria-label="显示"><Icon name="show" /><Caret size={8} /></NavTool>
                </NavHeader>
                <TreeBox>
                  <ul>
                    <TreeRow><Icon name="asm" size={15} /><Latin>ASM0001.ASM</Latin></TreeRow>
                    <TreeRow $level={1}><Icon name="part" size={14} /><Missing /><Latin>M12X45_GB1228&lt;GB1228&gt;.PRT</Latin></TreeRow>
                    <TreeRow $level={1}><Icon name="part" size={14} /><Missing /><Latin>SPRING_COMPRESSED.PRT</Latin></TreeRow>
                  </ul>
                </TreeBox>
              </NavPanel>
            </NavMain>
            <Sash>
              <SashButton aria-label="导航器" />
              <SashButton $raised aria-label="浏览器" />
            </Sash>
          </Navigator>
          <Viewport>
            <Model />
            <MenuManager>
              <ManagerTitle>菜单管理器</ManagerTitle>
              <ManagerGroup><Caret size={12} />组件</ManagerGroup>
              <ManagerBody>
                <ManagerScroll aria-label="向上">
                  <svg width="14" height="15"><path d="M7 1l7 13H0z" fill="#10308c" /><path d="M7 1L0 14h4z" fill="#88a4dc" /></svg>
                </ManagerScroll>
                <ul>
                  {managerItems.map((m) => (
                    <li key={m}><ManagerItem>{m}</ManagerItem></li>
                  ))}
                </ul>
                <ManagerScroll aria-label="向下">
                  <svg width="14" height="18"><path d="M0 4h14L7 17z" fill="#10308c" /><path d="M0 4h3l4 13z" fill="#88a4dc" /></svg>
                </ManagerScroll>
              </ManagerBody>
            </MenuManager>
          </Viewport>
          <Rail>
            <DotLine $flat />
            <RailColumns>
              <RailSet items={railLeft} />
              <RailSet items={railRight} />
            </RailColumns>
          </Rail>
          <Watermark>
            <svg width="60" height="62" viewBox="0 0 60 62" fillRule="evenodd" aria-hidden="true">
              <path
                transform="rotate(45 23 21)"
                d="M-1 21a24 15 0 1 0 48 0a24 15 0 1 0 -48 0zM2 22a22 12 0 1 0 44 0a22 12 0 1 0 -44 0z"
                fill="#4f77a4"
              />
              <path d="M44 22Q60 20 58 36Q54 54 38 58Q30 58 29 54Q42 56 50 42Q56 26 44 22z" fill="#c04a78" />
              <path d="M42 35Q26 30 15 38Q8 46 16 50Q30 52 38 42Q42 34 45 23" fill="none" stroke="#7f97b8" strokeWidth="2" />
            </svg>
            <WatermarkText>
              <WatermarkName>野火论坛</WatermarkName>
              <WatermarkUrl>www.proewildfire.cn</WatermarkUrl>
            </WatermarkText>
          </Watermark>
        </Workspace>
      </Client>
      <EdgeWidget />
    </Frame>
  );
}
